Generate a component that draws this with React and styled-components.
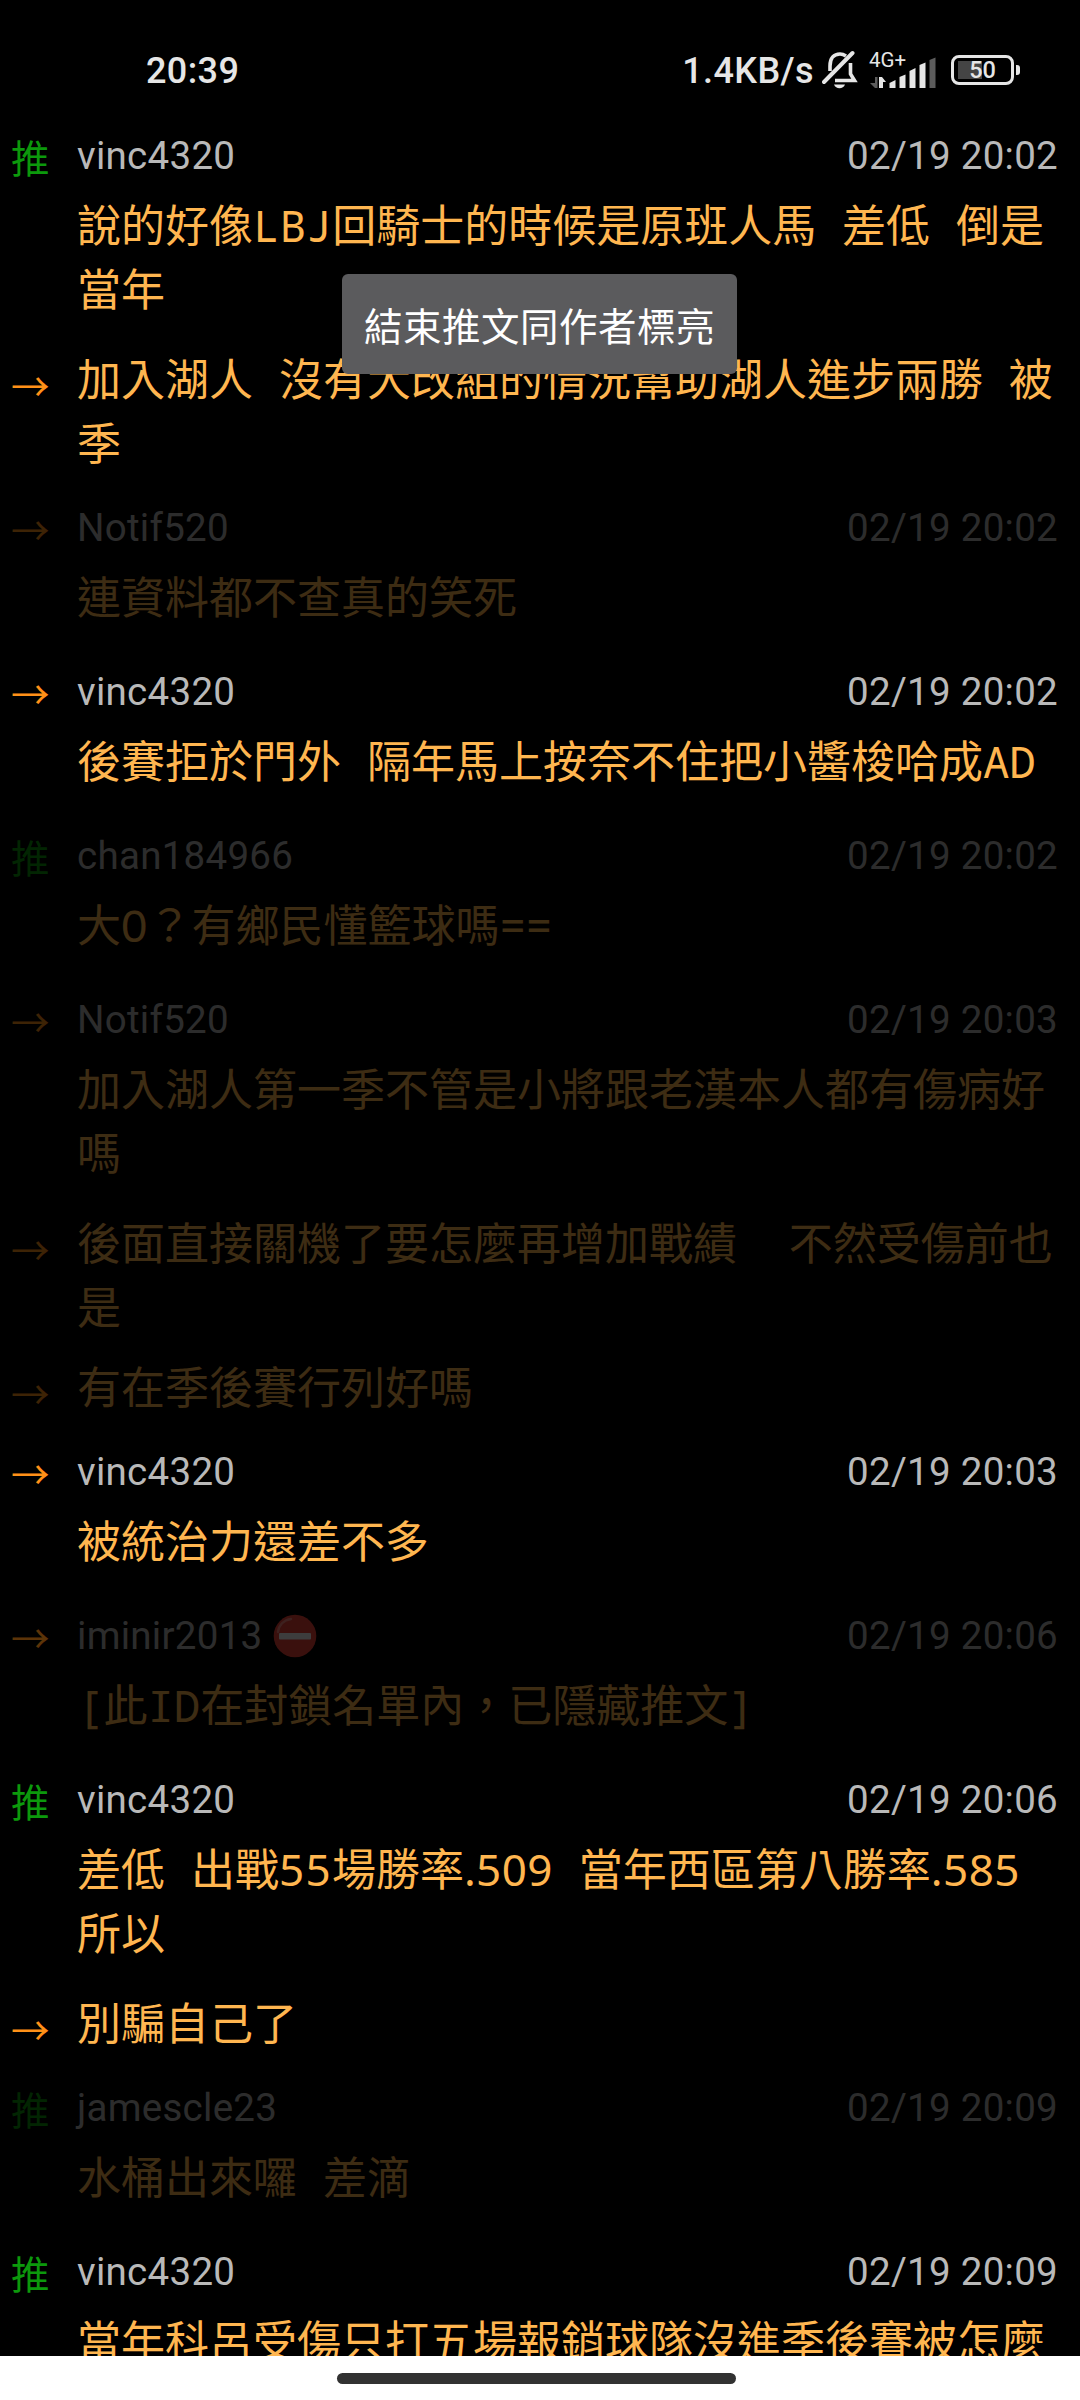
import React from 'react'
import styled, { createGlobalStyle } from 'styled-components'

const GlobalStyle = createGlobalStyle`
  body {
    margin: 0;
    background: #000000;
  }
`

const Screen = styled.div`
  position: relative;
  display: flex;
  flex-direction: column;
  width: 1080px;
  height: 2400px;
  overflow: hidden;
  background: #000000;
  font-family: Roboto, 'Noto Sans CJK TC', sans-serif;
`

const StatusBar = styled.header`
  display: flex;
  flex: none;
  align-items: center;
  justify-content: space-between;
  box-sizing: border-box;
  height: 112px;
  padding: 28px 60px 0 146px;
  color: #e6e6e6;
`

const StatusText = styled.span`
  padding-top: 2px;
  font-size: 36px;
  font-weight: 500;
  line-height: 42px;
  letter-spacing: 0.4px;
`

const StatusGroup = styled.div`
  display: flex;
  align-items: center;
`

const BellIcon = styled.svg`
  width: 36px;
  height: 40px;
  margin-left: 8px;
`

const Signal = styled.div`
  display: flex;
  flex-direction: column;
  width: 70px;
  height: 38px;
  margin-left: 11px;
`

const NetworkType = styled.span`
  height: 17px;
  font-size: 20.5px;
  line-height: 19px;
`

const SignalBars = styled.svg`
  width: 70px;
  height: 32px;
  margin-top: -11px;
`

const BatteryWrap = styled.div`
  display: flex;
  align-items: center;
  margin-left: 12px;
`

const Battery = styled.div`
  display: flex;
  align-items: center;
  justify-content: center;
  box-sizing: border-box;
  width: 63px;
  height: 30px;
  border: 3px solid #e6e6e6;
  border-radius: 8px;
  background: linear-gradient(#444444, #444444) 4px 3px / 24px 18px no-repeat;
  font-size: 23.5px;
  font-weight: 500;
  line-height: 24px;
`

const BatteryTip = styled.div`
  width: 4px;
  height: 10px;
  margin-left: 2px;
  border-radius: 0 3px 3px 0;
  background: #e6e6e6;
`

const PushList = styled.main`
  flex: 1;
  min-height: 0;
  overflow: hidden;
`

const PushRow = styled.article`
  display: grid;
  grid-template-columns: 66px 1fr;
  padding: ${props => (props.$reply ? '7px 22px 9px 11px' : '18px 22px 19px 11px')};
`

const Mark = styled.span`
  margin-top: ${props => (props.$reply ? '11px' : '0')};
  height: 52px;
  font-family: 'Noto Sans CJK TC', sans-serif;
  font-size: 38.5px;
  line-height: 52px;
  color: ${props => (props.$push ? '#0c990c' : '#ff9118')};
  opacity: ${props => props.$opacity};
`

const Body = styled.div`
  opacity: ${props => (props.$dim ? 0.24 : 1)};
`

const Meta = styled.div`
  display: flex;
  justify-content: space-between;
  height: 52px;
  margin-bottom: 11px;
  font-size: 38.5px;
  line-height: 52px;
  letter-spacing: 0.28px;
  color: #b9b9b9;
`

const Author = styled.span`
  display: flex;
  align-items: center;
`

const BlockedIcon = styled.svg`
  width: 44px;
  height: 44px;
  margin-left: 10px;
`

const Message = styled.p`
  margin: 0;
  font-family: 'Noto Sans Mono', 'DejaVu Sans Mono', 'Noto Sans CJK TC', monospace;
  font-size: 44px;
  line-height: 64px;
  white-space: pre-wrap;
  word-spacing: -0.5px;
  color: #ffb650;
`

// plain zeros, spaced out to the monospace advance
const Digits = styled.span`
  font-family: 'Noto Sans', sans-serif;
  letter-spacing: ${props => (props.$decimal ? '0.01em' : '0.03em')};
  line-height: 1;
`

const Toast = styled.div`
  position: absolute;
  top: 274px;
  left: 342px;
  box-sizing: border-box;
  width: 395px;
  height: 100px;
  padding: 26px 22px 18px;
  border-radius: 6px;
  background: #5b5b5d;
  color: #ffffff;
  font-size: 38.5px;
  line-height: 56px;
  letter-spacing: 0.5px;
  white-space: nowrap;
`

const NavigationBar = styled.footer`
  display: flex;
  flex: none;
  justify-content: center;
  box-sizing: border-box;
  height: 44px;
  padding: 17px 7px 0 0;
  background: #ffffff;
`

const HomeHandle = styled.div`
  width: 399px;
  height: 11px;
  border-radius: 6px;
  background: #323232;
`

const pushes = [
  {
    push: true,
    author: 'vinc4320',
    time: '02/19 20:02',
    text: '說的好像LBJ回騎士的時候是原班人馬 差低 倒是當年',
  },
  { text: '加入湖人 沒有大改組的情況幫助湖人進步兩勝 被季' },
  { author: 'Notif520', time: '02/19 20:02', text: '連資料都不查真的笑死', dim: true },
  {
    author: 'vinc4320',
    time: '02/19 20:02',
    text: '後賽拒於門外 隔年馬上按奈不住把小醬梭哈成AD',
  },
  {
    push: true,
    author: 'chan184966',
    time: '02/19 20:02',
    text: '大O？有鄉民懂籃球嗎==',
    dim: true,
  },
  {
    author: 'Notif520',
    time: '02/19 20:03',
    text: '加入湖人第一季不管是小將跟老漢本人都有傷病好嗎',
    dim: true,
  },
  { text: '後面直接關機了要怎麼再增加戰績  不然受傷前也是', dim: true },
  { text: '有在季後賽行列好嗎', dim: true },
  { author: 'vinc4320', time: '02/19 20:03', text: '被統治力還差不多' },
  {
    author: 'iminir2013',
    time: '02/19 20:06',
    text: '[此ID在封鎖名單內，已隱藏推文]',
    dim: true,
    blocked: true,
  },
  {
    push: true,
    author: 'vinc4320',
    time: '02/19 20:06',
    text: '差低 出戰55場勝率.509 當年西區第八勝率.585 所以',
  },
  { text: '別騙自己了' },
  { push: true, author: 'jamescle23', time: '02/19 20:09', text: '水桶出來囉 差滴', dim: true },
  {
    push: true,
    author: 'vinc4320',
    time: '02/19 20:09',
    text: '當年科呂受傷只打五場報銷球隊沒進季後賽被怎麼',
  },
]

function markOpacity({ dim, blocked }) {
  if (blocked) return 0.36
  return dim ? 0.24 : 1
}

function renderText(text) {
  return text.split(/(\.?\d+)/).map((part, index) =>
    index % 2 ? (
      <Digits key={index} $decimal={part.startsWith('.')}>
        {part}
      </Digits>
    ) : (
      part
    )
  )
}

function Push({ item }) {
  const reply = !item.author
  return (
    <PushRow $reply={reply}>
      <Mark $push={item.push} $reply={reply} $opacity={markOpacity(item)}>
        {item.push ? '推' : '→'}
      </Mark>
      <Body $dim={item.dim}>
        {item.author && (
          <Meta>
            <Author>
              {item.author}
              {item.blocked && (
                <BlockedIcon viewBox="0 0 44 44">
                  <circle cx="22" cy="22" r="21.3" fill="#f04338" />
                  <path
                    d="M5 18C6 11 11 6 18 5"
                    fill="none"
                    stroke="#ff8a80"
                    strokeWidth="2.5"
                    strokeLinecap="round"
                  />
                  <rect x="6" y="19" width="32" height="6.5" rx="1" fill="#ffffff" />
                </BlockedIcon>
              )}
            </Author>
            <span>{item.time}</span>
          </Meta>
        )}
        <Message>{renderText(item.text)}</Message>
      </Body>
    </PushRow>
  )
}

export default function App() {
  return (
    <Screen lang="zh-Hant">
      <GlobalStyle />
      <StatusBar>
        <StatusText>20:39</StatusText>
        <StatusGroup>
          <StatusText>1.4KB/s</StatusText>
          <BellIcon viewBox="0 0 36 40" fill="none" stroke="#e6e6e6" strokeWidth="3.6">
            <path d="M8 21V16C8 8 12 4 18 4C20.5 4 22.5 5 24 6" />
            <path d="M28.5 13V24L32.5 30.5H13" />
            <path d="M2 32L30.5 3" strokeWidth="4" strokeLinecap="round" />
            <path d="M12 34.5H23C22 37 20 38.3 17.5 38.3S13 37 12 34.5Z" fill="#e6e6e6" stroke="none" />
          </BellIcon>
          <Signal>
            <NetworkType>4G+</NetworkType>
            <SignalBars viewBox="0 0 70 32">
              <path d="M6 20H8.5V31H6L1 26H6Z" fill="#5c5c5c" />
              <path d="M10 20H13L17 25H14V31H10Z" fill="#e6e6e6" />
              <path d="M20.5 31V26L26.5 23V31Z" fill="#e6e6e6" />
              <path d="M30.5 31V20L36.5 17.5V31Z" fill="#e6e6e6" />
              <path d="M40.5 31V14L46.5 11V31Z" fill="#e6e6e6" />
              <path d="M50.5 31V8L56.5 5.5V31Z" fill="#e6e6e6" />
              <path d="M60.5 31V3L66.5 0.5V31Z" fill="#5c5c5c" />
            </SignalBars>
          </Signal>
          <BatteryWrap>
            <Battery>50</Battery>
            <BatteryTip />
          </BatteryWrap>
        </StatusGroup>
      </StatusBar>
      <PushList>
        {pushes.map((item, index) => (
          <Push key={index} item={item} />
        ))}
      </PushList>
      <Toast>結束推文同作者標亮</Toast>
      <NavigationBar>
        <HomeHandle />
      </NavigationBar>
    </Screen>
  )
}
